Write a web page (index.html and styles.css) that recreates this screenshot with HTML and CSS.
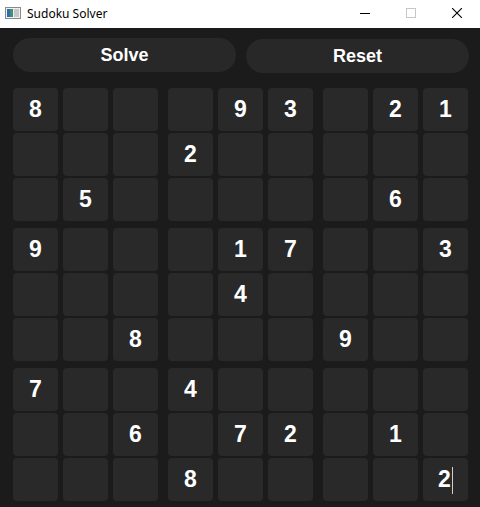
FILE: index.html
```html
<!DOCTYPE html>
<html>
<head>
<meta charset="utf-8">
<title>Sudoku Solver</title>
<link rel="stylesheet" href="styles.css">
</head>
<body>
<div class="window">
  <div class="titlebar">
    <svg class="app-icon" width="16" height="16" viewBox="0 0 16 16">
      <rect x="0.5" y="2.5" width="15" height="11" fill="#f0f0f0" stroke="#8a8a8a"/>
      <rect x="2" y="4" width="6" height="8" fill="#3f8f7a"/>
      <rect x="2" y="4" width="3" height="8" fill="#2f6fa8"/>
      <rect x="9" y="4" width="5" height="8" fill="#c8c8c8"/>
    </svg>
    <span class="title">Sudoku Solver</span>
    <div class="controls">
      <span class="ctl"><svg width="10" height="10" viewBox="0 0 10 10"><line x1="0" y1="5.5" x2="10" y2="5.5" stroke="#000" stroke-width="1"/></svg></span>
      <span class="ctl"><svg width="10" height="10" viewBox="0 0 10 10"><rect x="0.5" y="0.5" width="9" height="9" fill="none" stroke="#c6c6c6"/></svg></span>
      <span class="ctl"><svg width="10" height="10" viewBox="0 0 10 10"><path d="M0 0 L10 10 M10 0 L0 10" stroke="#000" stroke-width="1.1"/></svg></span>
    </div>
  </div>
  <div class="content">
    <div class="buttons">
      <button class="btn">Solve</button>
      <button class="btn btn-reset">Reset</button>
    </div>
    <div class="board">
      <div class="block">
        <div class="cell">8</div><div class="cell"></div><div class="cell"></div>
        <div class="cell"></div><div class="cell"></div><div class="cell"></div>
        <div class="cell"></div><div class="cell">5</div><div class="cell"></div>
      </div>
      <div class="block">
        <div class="cell"></div><div class="cell">9</div><div class="cell">3</div>
        <div class="cell">2</div><div class="cell"></div><div class="cell"></div>
        <div class="cell"></div><div class="cell"></div><div class="cell"></div>
      </div>
      <div class="block">
        <div class="cell"></div><div class="cell">2</div><div class="cell">1</div>
        <div class="cell"></div><div class="cell"></div><div class="cell"></div>
        <div class="cell"></div><div class="cell">6</div><div class="cell"></div>
      </div>
      <div class="block">
        <div class="cell">9</div><div class="cell"></div><div class="cell"></div>
        <div class="cell"></div><div class="cell"></div><div class="cell"></div>
        <div class="cell"></div><div class="cell"></div><div class="cell">8</div>
      </div>
      <div class="block">
        <div class="cell"></div><div class="cell">1</div><div class="cell">7</div>
        <div class="cell"></div><div class="cell">4</div><div class="cell"></div>
        <div class="cell"></div><div class="cell"></div><div class="cell"></div>
      </div>
      <div class="block">
        <div class="cell"></div><div class="cell"></div><div class="cell">3</div>
        <div class="cell"></div><div class="cell"></div><div class="cell"></div>
        <div class="cell">9</div><div class="cell"></div><div class="cell"></div>
      </div>
      <div class="block">
        <div class="cell">7</div><div class="cell"></div><div class="cell"></div>
        <div class="cell"></div><div class="cell"></div><div class="cell">6</div>
        <div class="cell"></div><div class="cell"></div><div class="cell"></div>
      </div>
      <div class="block">
        <div class="cell">4</div><div class="cell"></div><div class="cell"></div>
        <div class="cell"></div><div class="cell">7</div><div class="cell">2</div>
        <div class="cell">8</div><div class="cell"></div><div class="cell"></div>
      </div>
      <div class="block">
        <div class="cell"></div><div class="cell"></div><div class="cell"></div>
        <div class="cell"></div><div class="cell">1</div><div class="cell"></div>
        <div class="cell"></div><div class="cell"></div><div class="cell focused">2<span class="caret"></span></div>
      </div>
    </div>
  </div>
</div>
</body>
</html>
```

FILE: styles.css
```css
html, body {
  margin: 0;
  padding: 0;
  background: #1b1b1b;
}

.window {
  width: 480px;
  height: 507px;
  background: #1b1b1b;
  overflow: hidden;
}

.titlebar {
  height: 28px;
  background: #ffffff;
  display: flex;
  align-items: center;
  font-family: "Noto Sans", "Open Sans", sans-serif;
  font-size: 12px;
  color: #000;
}

.app-icon {
  margin-left: 5px;
  margin-right: 6px;
  margin-top: -2px;
}

.title {
  margin-top: -2px;
}

.controls {
  margin-left: auto;
  display: flex;
  height: 100%;
}

.ctl {
  width: 46px;
  display: flex;
  align-items: center;
  justify-content: center;
  margin-top: -3px;
}

.content {
  padding: 10px 11px 0 13px;
}

.buttons {
  display: grid;
  grid-template-columns: 223px 223px;
  column-gap: 10px;
  height: 34px;
}

.btn {
  border: none;
  border-radius: 17px;
  background: #282828;
  color: #ffffff;
  font-family: "Liberation Sans", Arial, sans-serif;
  font-weight: bold;
  font-size: 18px;
  padding: 0;
  height: 34px;
}

.btn-reset {
  margin-top: 1px;
}

.board {
  margin-top: 16px;
  display: grid;
  grid-template-columns: repeat(3, 145px);
  column-gap: 10px;
  row-gap: 7px;
}

.block {
  display: grid;
  grid-template-columns: repeat(3, 45px);
  grid-template-rows: repeat(3, 43px);
  column-gap: 5px;
  row-gap: 2px;
}

.cell {
  background: #292929;
  border-radius: 4px;
  display: flex;
  align-items: center;
  justify-content: center;
  color: #ffffff;
  font-family: "Liberation Sans", Arial, sans-serif;
  font-weight: bold;
  font-size: 23px;
}

.caret {
  display: inline-block;
  width: 1px;
  height: 27px;
  background: #cfcfcf;
  margin-left: 1px;
  margin-top: 2px;
}
```
